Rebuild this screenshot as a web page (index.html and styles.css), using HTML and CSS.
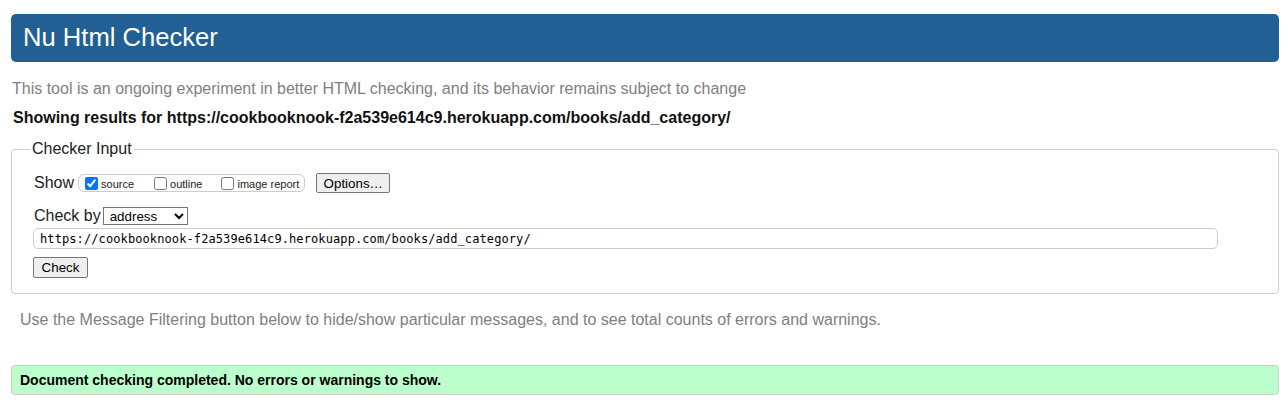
FILE: index.html
```html
<!DOCTYPE html>
<html>
<head>
<meta charset="utf-8">
<title>Nu Html Checker</title>
<link rel="stylesheet" href="styles.css">
</head>
<body>
<h1 class="banner">Nu Html Checker</h1>
<p class="intro">This tool is an ongoing experiment in better HTML checking, and its behavior remains subject to change</p>
<p class="showing">Showing results for https://cookbooknook-f2a539e614c9.herokuapp.com/books/add_category/</p>
<fieldset class="input-box">
  <legend class="legend">Checker Input</legend>
  <div class="row row-show">
    <span class="row-label">Show</span>
    <span class="show-group">
      <label class="opt"><input type="checkbox" class="cb" checked><span>source</span></label>
      <label class="opt opt-2"><input type="checkbox" class="cb"><span>outline</span></label>
      <label class="opt opt-3"><input type="checkbox" class="cb"><span>image report</span></label>
    </span>
    <button class="btn btn-options" type="button">Options…</button>
  </div>
  <div class="row row-by">
    <span class="row-label">Check by</span>
    <select class="select"><option>address</option></select>
  </div>
  <input class="url" type="text" value="https://cookbooknook-f2a539e614c9.herokuapp.com/books/add_category/">
  <div class="row row-submit">
    <button class="btn btn-check" type="button">Check</button>
  </div>
</fieldset>
<p class="filter-note">Use the Message Filtering button below to hide/show particular messages, and to see total counts of errors and warnings.</p>
<div class="success">Document checking completed. No errors or warnings to show.</div>
</body>
</html>
```
FILE: styles.css
```css
html, body {
  background: #ffffff;
}
body {
  margin: 0;
  padding: 14px 9px 0 11px;
  font-family: "Liberation Sans", Arial, sans-serif;
  color: #222;
}
.banner {
  margin: 0;
  height: 48px;
  box-sizing: border-box;
  display: flex;
  align-items: center;
  padding: 0 0 2px 12px;
  background: #215f94;
  color: #ffffff;
  border-radius: 5px;
  font-size: 25.6px;
  font-weight: normal;
}
.intro {
  margin: 17px 0 0 1px;
  font-size: 16px;
  line-height: 20px;
  color: #808080;
}
.showing {
  margin: 9px 0 0 2px;
  font-size: 16px;
  line-height: 20px;
  font-weight: bold;
  color: #111;
}
.input-box {
  margin: 12px 0 0 0;
  border: 1px solid #cccccc;
  border-radius: 4px;
  padding: 14px 20px 15px 21px;
  min-width: 0;
}
.legend {
  margin-left: -3px;
  padding: 0 2px;
  font-size: 16px;
  line-height: 18px;
  color: #222;
}
.row {
  display: flex;
  align-items: center;
}
.row-label {
  font-size: 16px;
  color: #222;
}
.row-show {
  height: 22px;
  margin-left: 1px;
}
.show-group {
  display: inline-flex;
  align-items: center;
  height: 18px;
  box-sizing: border-box;
  margin-left: 4px;
  padding: 0 5px 0 6px;
  border: 1px solid #cccccc;
  border-radius: 6px;
}
.opt {
  display: inline-flex;
  align-items: center;
  font-size: 11px;
  color: #222;
}
.opt span {
  margin-left: 3px;
  padding-top: 2px;
}
.opt-2 { margin-left: 20px; }
.opt-3 { margin-left: 19px; }
.cb {
  width: 13px;
  height: 13px;
  margin: 0;
}
.btn {
  font-family: "Liberation Sans", Arial, sans-serif;
  font-size: 13.33px;
  color: #000;
  background: #efefef;
  border: 1px solid #767676;
  border-radius: 2px;
  height: 20px;
  box-sizing: border-box;
  padding: 0 6px;
}
.btn-options {
  margin-left: 11px;
  width: 74px;
}
.row-by {
  margin-top: 12px;
  margin-left: 1px;
  height: 19px;
}
.select {
  margin-left: 2px;
  width: 85px;
  height: 18px;
  font-family: "Liberation Sans", Arial, sans-serif;
  font-size: 13.33px;
  color: #000;
  border: 1px solid #767676;
  border-radius: 0;
  background: #fff;
  padding: 0 0 0 2px;
}
.url {
  display: block;
  margin-top: 3px;
  width: 1185px;
  height: 21px;
  box-sizing: border-box;
  border: 1px solid #cccccc;
  border-radius: 5px;
  padding: 0 6px;
  font-family: "DejaVu Sans Mono", "Liberation Mono", monospace;
  font-size: 12px;
  letter-spacing: 0.1px;
  color: #000;
}
.row-submit {
  margin-top: 8px;
}
.btn-check {
  width: 55px;
  height: 21px;
}
.filter-note {
  margin: 16px 0 0 9px;
  font-size: 16px;
  line-height: 20px;
  color: #808080;
}
.success {
  margin-top: 35px;
  height: 30px;
  box-sizing: border-box;
  display: flex;
  align-items: center;
  padding-left: 8px;
  background: #bbffcc;
  border: 1px solid #cccccc;
  border-radius: 4px;
  font-size: 14px;
  font-weight: bold;
  color: #000;
}
```
